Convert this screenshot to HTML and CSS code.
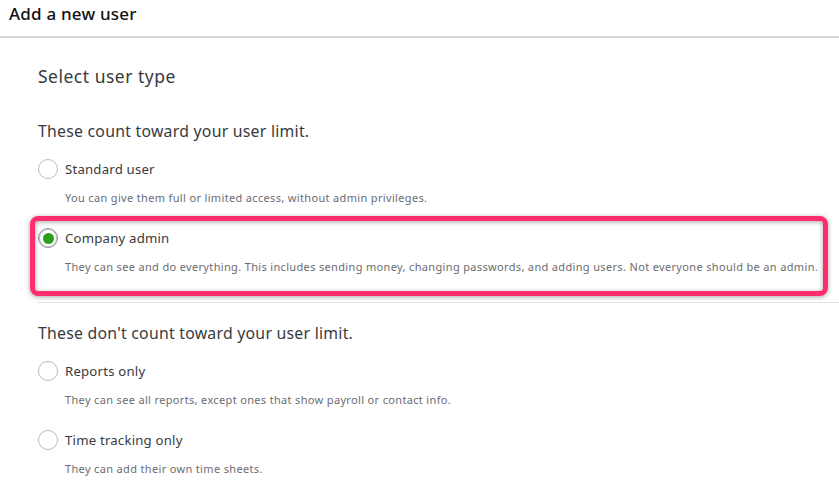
FILE: index.html
```html
<!DOCTYPE html>
<html>
<head>
<meta charset="utf-8">
<link rel="stylesheet" href="styles.css">
</head>
<body>
<div class="header">Add a new user</div>
<div class="main">
  <div class="title">Select user type</div>
  <div class="group-title first">These count toward your user limit.</div>
  <div class="option">
    <div class="row"><span class="radio"></span><span class="label">Standard user</span></div>
    <div class="desc">You can give them full or limited access, without admin privileges.</div>
  </div>
  <div class="option highlighted">
    <div class="row"><span class="radio checked"></span><span class="label">Company admin</span></div>
    <div class="desc">They can see and do everything. This includes sending money, changing passwords, and adding users. Not everyone should be an admin.</div>
  </div>
  <div class="divider"></div>
  <div class="group-title">These don't count toward your user limit.</div>
  <div class="option">
    <div class="row"><span class="radio"></span><span class="label">Reports only</span></div>
    <div class="desc">They can see all reports, except ones that show payroll or contact info.</div>
  </div>
  <div class="option">
    <div class="row"><span class="radio"></span><span class="label">Time tracking only</span></div>
    <div class="desc">They can add their own time sheets.</div>
  </div>
</div>
</body>
</html>
```
FILE: styles.css
```css
html, body {
  margin: 0;
  padding: 0;
  background: #fff;
  font-family: "Noto Sans", "Open Sans", sans-serif;
  color: #393a3d;
}
.header {
  height: 28px;
  line-height: 28px;
  padding: 0 0 8px 9px;
  border-bottom: 2px solid #d4d4d4;
  font-size: 17px;
  letter-spacing: 0.2px;
  font-weight: 500;
  color: #111;
}
.main {
  padding-left: 38px;
}
.title {
  margin-top: 26px;
  line-height: 24px;
  font-size: 17.5px;
  letter-spacing: 0.5px;
  color: #393a3d;
}
.group-title {
  margin-top: 19px;
  line-height: 22px;
  font-size: 15.8px;
  letter-spacing: 0.25px;
  color: #393a3d;
}
.group-title.first {
  margin-top: 32px;
}
.option {
  margin-top: 17px;
  position: relative;
}
.option + .option {
  margin-top: 22px;
}
.row {
  display: flex;
  align-items: center;
  height: 20px;
}
.radio {
  width: 18px;
  height: 18px;
  border: 1px solid #b9babd;
  border-radius: 50%;
  box-sizing: content-box;
  display: flex;
  align-items: center;
  justify-content: center;
  background: #fff;
}
.radio.checked {
  border-color: #8d9096;
  box-shadow: inset 0 0 0 1px #c8c9cc;
}
.radio.checked::after {
  content: "";
  width: 11px;
  height: 11px;
  border-radius: 50%;
  background: #2ca01c;
}
.label {
  margin-left: 7px;
  font-size: 13.2px;
  letter-spacing: 0.2px;
  color: #393a3d;
}
.desc {
  margin-top: 11px;
  padding-left: 27px;
  line-height: 16px;
  font-size: 11px;
  letter-spacing: 0.34px;
  color: #6b6c72;
}
.highlighted::after {
  content: "";
  position: absolute;
  left: -8px;
  right: 11px;
  top: -12px;
  bottom: -21px;
  border: 5px solid #ff2d6b;
  border-radius: 8px;
  box-shadow: 0 1px 5px rgba(0,0,0,0.35), inset 0 1px 5px rgba(0,0,0,0.35);
  pointer-events: none;
}
.divider {
  margin-top: 27px;
  height: 1px;
  background: #e3e3e3;
}
```
